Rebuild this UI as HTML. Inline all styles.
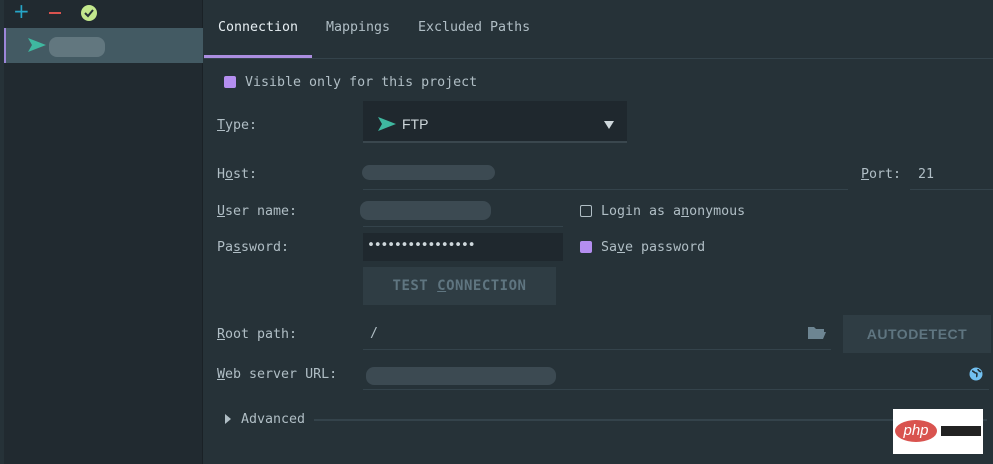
<!DOCTYPE html>
<html><head><meta charset="utf-8"><style>
*{margin:0;padding:0;box-sizing:border-box}
body{width:993px;height:464px;background:#263238;overflow:hidden;position:relative;font-family:"DejaVu Sans Mono","Liberation Mono",monospace;font-size:13.3px;color:#b0bec5}
.a{position:absolute;white-space:nowrap;line-height:19px}
.u{text-decoration:underline}
.line{position:absolute;height:1px;background:#34434b}
.blur{position:absolute;background:#3c4a52;border-radius:8px}
.btn{position:absolute;background:#2f3d44;color:#5f7580;font-family:"Liberation Sans",sans-serif;font-weight:bold;font-size:14px;text-align:center;letter-spacing:0.5px}
.cb{position:absolute;width:12px;height:12px;border-radius:2px}
</style></head><body>
<div class="a" style="left:0;top:0;width:203px;height:464px;background:#212a30;border-right:1px solid #1a2126"></div>
<div class="a" style="left:0;top:0;width:4px;height:464px;background:#263238"></div>
<div class="a" style="left:13px;top:2px;color:#26a6c8;font-size:20px;font-family:'DejaVu Sans'">+</div>
<div class="a" style="left:49px;top:12px;width:12px;height:2px;background:#d9534f"></div>
<svg class="a" style="left:80px;top:4px" width="18" height="18" viewBox="0 0 18 18"><circle cx="9" cy="9" r="8" fill="#c3e88d"/><path d="M5 9l3 3 5-6" stroke="#263238" stroke-width="2" fill="none"/></svg>
<div class="a" style="left:4px;top:28px;width:199px;height:35px;background:#435a63;border-left:2px solid #9d86d9"></div>
<svg class="a" style="left:28px;top:38px" width="18" height="14" viewBox="0 0 18 14"><path d="M0 0L18 7L0 14L4 7Z" fill="#3fb8a0"/></svg>
<div class="blur" style="left:49px;top:37px;width:56px;height:20px;background:#62777f"></div>
<div class="a" style="left:218px;top:18px;color:#e6eef2">Connection</div>
<div class="a" style="left:326px;top:18px">Mappings</div>
<div class="a" style="left:418px;top:18px">Excluded Paths</div>
<div class="a" style="left:204px;top:55px;width:108px;height:3px;background:#ab8ee0"></div>
<div class="line" style="left:204px;top:58px;width:789px"></div>
<div class="cb" style="left:224px;top:76px;background:#b48ef0"></div>
<div class="a" style="left:245px;top:73px">Visible only for this project</div>
<div class="a" style="left:217px;top:116px"><span class="u">T</span>ype:</div>
<div class="a" style="left:363px;top:101px;width:264px;height:42px;background:#1f282e;border-bottom:2px solid #3a474e"></div>
<svg class="a" style="left:378px;top:117px" width="18" height="14" viewBox="0 0 18 14"><path d="M0 0L18 7L0 14L4 7Z" fill="#3fb8a0"/></svg>
<div class="a" style="left:402px;top:115px;font-family:'Liberation Sans',sans-serif;font-size:14px;color:#cfd8dc">FTP</div>
<div class="a" style="left:604px;top:121px;width:0;height:0;border-left:5px solid transparent;border-right:5px solid transparent;border-top:8px solid #cfd8dc"></div>
<div class="a" style="left:217px;top:165px">H<span class="u">o</span>st:</div>
<div class="blur" style="left:362px;top:165px;width:133px;height:15px"></div>
<div class="line" style="left:363px;top:189px;width:485px"></div>
<div class="a" style="left:861px;top:165px"><span class="u">P</span>ort:</div>
<div class="a" style="left:918px;top:165px">21</div>
<div class="line" style="left:910px;top:189px;width:83px"></div>
<div class="a" style="left:217px;top:202px"><span class="u">U</span>ser name:</div>
<div class="blur" style="left:360px;top:201px;width:131px;height:19px"></div>
<div class="line" style="left:363px;top:226px;width:200px"></div>
<div class="cb" style="left:580px;top:205px;border:1px solid #b0bec5"></div>
<div class="a" style="left:601px;top:202px">Login as a<span class="u">n</span>onymous</div>
<div class="a" style="left:217px;top:238px">Pa<span class="u">s</span>sword:</div>
<div class="a" style="left:363px;top:233px;width:200px;height:28px;background:#1f282e"></div>
<div class="a" style="left:367px;top:236px;letter-spacing:-1.3px;color:#cfd8dc">••••••••••••••••</div>
<div class="cb" style="left:580px;top:241px;background:#b48ef0"></div>
<div class="a" style="left:601px;top:238px">Sa<span class="u">v</span>e password</div>
<div class="btn" style="left:363px;top:267px;width:193px;height:38px;line-height:38px;font-family:'DejaVu Sans Mono',monospace;font-weight:bold">TEST <span class="u">C</span>ONNECTION</div>
<div class="a" style="left:217px;top:325px"><span class="u">R</span>oot path:</div>
<div class="a" style="left:370px;top:324px">/</div>
<svg class="a" style="left:808px;top:326px" width="18" height="14" viewBox="0 0 18 14"><path d="M0 1h6l2 2h8v3H4L1 13H0z M4 6h14l-3 7H1z" fill="#6d8592"/></svg>
<div class="line" style="left:363px;top:349px;width:468px"></div>
<div class="btn" style="left:843px;top:315px;width:148px;height:38px;line-height:38px">AUTODETECT</div>
<div class="a" style="left:217px;top:365px"><span class="u">W</span>eb server URL:</div>
<div class="blur" style="left:366px;top:367px;width:190px;height:18px"></div>
<svg class="a" style="left:969px;top:367px" width="14" height="14" viewBox="0 0 14 14"><circle cx="7" cy="7" r="6.5" fill="#72c0f0"/><path d="M3 4c2 0 2 2 4 2s0 3 1 4M9 2c0 2 2 2 3 3" stroke="#263238" stroke-width="1.6" fill="none"/></svg>
<div class="line" style="left:363px;top:389px;width:626px"></div>
<div class="a" style="left:225px;top:414px;width:0;height:0;border-top:5px solid transparent;border-bottom:5px solid transparent;border-left:6px solid #b0bec5"></div>
<div class="a" style="left:241px;top:410px">Advanced</div>
<div class="a" style="left:314px;top:419px;width:673px;height:2px;background:#34434b"></div>
<div class="a" style="left:893px;top:409px;width:90px;height:45px;background:#fff"></div>
<div class="a" style="left:895px;top:420px;width:42px;height:22px;border-radius:50%;background:#d9534f;color:#fff;font-family:'Liberation Sans',sans-serif;font-style:italic;font-size:15px;text-align:center;line-height:21px">php</div>
<div class="a" style="left:941px;top:426px;width:40px;height:10px;background:#222"></div>
</body></html>
